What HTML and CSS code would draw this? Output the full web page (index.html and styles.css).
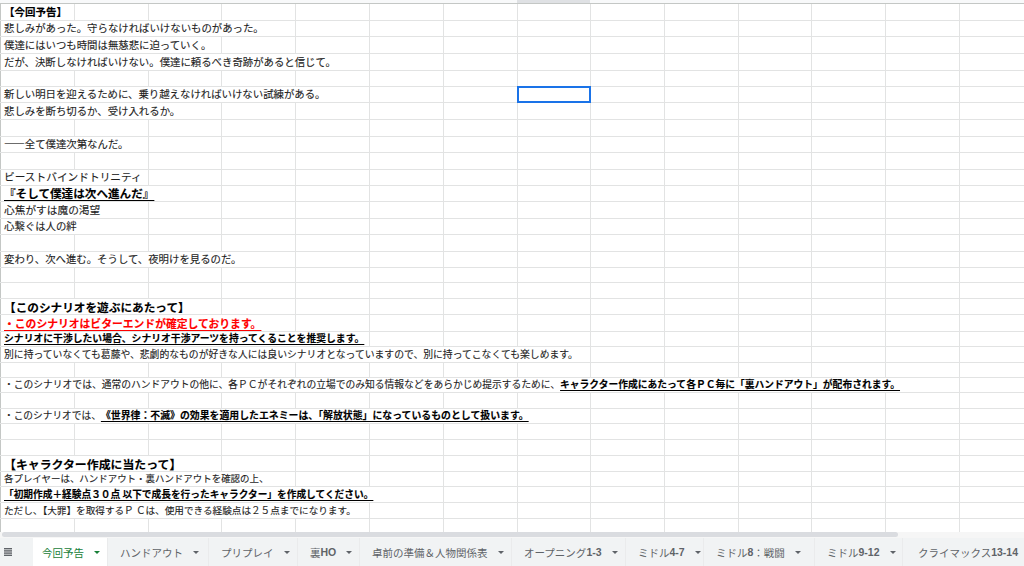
FILE: index.html
```html
<!DOCTYPE html>
<html lang="ja">
<head>
<meta charset="utf-8">
<title>今回予告</title>
<link rel="stylesheet" href="styles.css">
</head>
<body>
<div class="app">
  <div class="colhead cols"><i class="hsel"></i></div>
  <div class="grid">
    <div class="row cols h17"><div class="cell s1 t-title">【今回予告】</div></div>
    <div class="row cols h16"><div class="cell s4">悲しみがあった。守らなければいけないものがあった。</div></div>
    <div class="row cols h17"><div class="cell s3">僕達にはいつも時間は無慈悲に迫っていく。</div></div>
    <div class="row cols h17"><div class="cell s5">だが、決断しなければいけない。僕達に頼るべき奇跡があると信じて。</div></div>
    <div class="row cols h16"></div>
    <div class="row cols h16"><div class="cell s5">新しい明日を迎えるために、乗り越えなければいけない試練がある。</div><div class="sel"></div></div>
    <div class="row cols h17"><div class="cell s3">悲しみを断ち切るか、受け入れるか。</div></div>
    <div class="row cols h17"></div>
    <div class="row cols h16"><div class="cell s2">――全て僕達次第なんだ。</div></div>
    <div class="row cols h17"></div>
    <div class="row cols h16"><div class="cell s2 t-kana">ビーストバインドトリニティ</div></div>
    <div class="row cols h16"><div class="cell s3 t-em"><span class="u">『そして僕達は次へ進んだ』</span></div></div>
    <div class="row cols h17"><div class="cell s2 t-kana">心焦がすは魔の渇望</div></div>
    <div class="row cols h16"><div class="cell s2">心繋ぐは人の絆</div></div>
    <div class="row cols h17"></div>
    <div class="row cols h16"><div class="cell s4">変わり、次へ進む。そうして、夜明けを見るのだ。</div></div>
    <div class="row cols h15"></div>
    <div class="row cols h16"></div>
    <div class="row cols h16"><div class="cell s3 t-head">【このシナリオを遊ぶにあたって】</div></div>
    <div class="row cols h17"><div class="cell s4 t-red"><span class="u">・このシナリオはビターエンドが確定しております。</span></div></div>
    <div class="row cols h15"><div class="cell s5 t-s98"><span class="u">シナリオに干渉したい場合、シナリオ干渉アーツを持ってくることを推奨します。</span></div></div>
    <div class="row cols h16"><div class="cell s8 t-s98">別に持っていなくても葛藤や、悲劇的なものが好きな人には良いシナリオとなっていますので、別に持ってこなくても楽しめます。</div></div>
    <div class="row cols h15"></div>
    <div class="row cols h15"><div class="cell s13 t-s978">・このシナリオでは、通常のハンドアウトの他に、各ＰＣがそれぞれの立場でのみ知る情報などをあらかじめ提示するために、<span class="u">キャラクター作成にあたって各ＰＣ毎に「裏ハンドアウト」が配布されます。</span></div></div>
    <div class="row cols h16"></div>
    <div class="row cols h15"><div class="cell s8 t-s97">・このシナリオでは、<span class="u wide">《世界律：不滅》の効果を適用したエネミーは、「解放状態」になっているものとして扱います。</span></div></div>
    <div class="row cols h16"></div>
    <div class="row cols h16"></div>
    <div class="row cols h16"><div class="cell s3 t-head2">【キャラクター作成に当たって】</div></div>
    <div class="row cols h15"><div class="cell s4 t-s95">各プレイヤーは、ハンドアウト・裏ハンドアウトを確認の上、</div></div>
    <div class="row cols h16"><div class="cell s6 t-s97"><span class="u">「初期作成＋経験点３０点 以下で成長を行ったキャラクター」を作成してください。</span></div></div>
    <div class="row cols h16"><div class="cell s5 t-s96">ただし、【大罪】を取得するＰ Ｃは、使用できる経験点は２５点までになります。</div></div>
    <div class="row cols h13"></div>
  </div>
  <div class="hscroll"><div class="thumb"></div></div>
  <div class="tabbar">
    <div class="menu">
      <svg width="8" height="8" viewBox="0 0 8 8"><rect x="0" y="0" width="8" height="1.4" fill="#5f6368"/><rect x="0" y="2.2" width="8" height="1.4" fill="#5f6368"/><rect x="0" y="4.4" width="8" height="1.4" fill="#5f6368"/><rect x="0" y="6.6" width="8" height="1.4" fill="#5f6368"/></svg>
    </div>
    <div class="tab active tw1">今回予告<i class="caret"></i></div>
    <div class="tab tw2">ハンドアウト<i class="caret"></i></div>
    <div class="tab tw3">プリプレイ<i class="caret"></i></div>
    <div class="tab tw4">裏<span class="lat">HO</span><i class="caret"></i></div>
    <div class="tab tw5">卓前の準備＆人物関係表<i class="caret"></i></div>
    <div class="tab tw6">オープニング<span class="lat">1-3</span><i class="caret"></i></div>
    <div class="tab tw7">ミドル<span class="lat">4-7</span><i class="caret"></i></div>
    <div class="tab tw8">ミドル<span class="lat">8</span>：戦闘<i class="caret"></i></div>
    <div class="tab tw9">ミドル<span class="lat">9-12</span><i class="caret"></i></div>
    <div class="tab tw10">クライマックス<span class="lat">13-14</span></div>
  </div>
</div>
</body>
</html>
```
FILE: styles.css
```css
html, body {
  margin: 0;
  padding: 0;
}
body {
  width: 1024px;
  height: 566px;
  overflow: hidden;
  background: #fff;
  font-family: "Noto Sans CJK JP", "Liberation Sans", sans-serif;
  color: #1e1e1e;
}
.app {
  display: flex;
  flex-direction: column;
  height: 566px;
  overflow: hidden;
}
.cols {
  display: grid;
  grid-template-columns: 74px 74px 73px 74px 74px 74px 74px 73px 74px 74px 73px 74px 74px 74px;
}
.colhead {
  height: 4px;
  box-sizing: border-box;
  background: #f8f9fa;
  border-bottom: 1px solid #c4c7c5;
  flex: none;
}
.colhead .hsel {
  grid-column: 8;
  background: #dfe1e4;
}
.grid {
  flex: none;
  background-image:
    linear-gradient(#c4c7c5, #c4c7c5),
    linear-gradient(#e2e3e3, #e2e3e3), linear-gradient(#e2e3e3, #e2e3e3),
    linear-gradient(#e2e3e3, #e2e3e3), linear-gradient(#e2e3e3, #e2e3e3),
    linear-gradient(#e2e3e3, #e2e3e3), linear-gradient(#e2e3e3, #e2e3e3),
    linear-gradient(#e2e3e3, #e2e3e3), linear-gradient(#e2e3e3, #e2e3e3),
    linear-gradient(#e2e3e3, #e2e3e3), linear-gradient(#e2e3e3, #e2e3e3),
    linear-gradient(#e2e3e3, #e2e3e3), linear-gradient(#e2e3e3, #e2e3e3),
    linear-gradient(#e2e3e3, #e2e3e3);
  background-position: 0 0, 74px 0, 148px 0, 221px 0, 295px 0, 369px 0, 443px 0,
    517px 0, 590px 0, 664px 0, 738px 0, 811px 0, 885px 0, 959px 0;
  background-size: 1px 100%;
  background-repeat: no-repeat;
}
.row {
  box-sizing: border-box;
  border-bottom: 1px solid #e2e3e3;
}
.h13 { height: 13px; border-bottom: none; }
.h15 { height: 15px; }
.h16 { height: 16px; }
.h17 { height: 17px; }

.cell {
  background: #fff;
  margin-left: 1px;
  padding-left: 3px;
  display: flex;
  align-items: center;
  white-space: nowrap;
  line-height: 1;
  font-size: 10.4px;
  min-width: 0;
  -webkit-text-stroke: 0.12px currentColor;
}
.s1 { grid-column: 1 / span 1; }
.s2 { grid-column: 1 / span 2; }
.s3 { grid-column: 1 / span 3; }
.s4 { grid-column: 1 / span 4; }
.s5 { grid-column: 1 / span 5; }
.s6 { grid-column: 1 / span 6; }
.s8 { grid-column: 1 / span 8; }
.s13 { grid-column: 1 / span 13; }

.t-title { font-size: 10.5px; font-weight: 700; color: #000; }
.t-kana { font-size: 10.7px; }
.t-em { font-size: 11.6px; }
.t-head { font-size: 11.65px; font-weight: 700; color: #000; }
.t-head2 { font-size: 11.9px; font-weight: 700; color: #000; }
.t-red { font-size: 10.8px; color: #ff0000; }
.t-red .u { color: #ff0000; }
.t-s98 { font-size: 9.82px; }
.t-s978 { font-size: 9.78px; }
.t-s97 { font-size: 9.7px; }
.t-s96 { font-size: 9.62px; }
.t-s95 { font-size: 9.46px; }
.u {
  font-weight: 700;
  color: #000;
  text-decoration: underline;
  text-underline-offset: 1.5px;
}
.wide { font-size: 9.9px; }

.sel {
  grid-column: 8;
  margin: -1px -1px -1px 0;
  border: 2px solid #1a73e8;
  box-sizing: border-box;
}

.hscroll {
  flex: none;
  height: 6px;
  background: #f6f6f6;
  padding: 0 0 0 2px;
  box-sizing: border-box;
}
.thumb {
  width: 896px;
  height: 5px;
  background: #dadce0;
  border-radius: 3px;
}

.tabbar {
  flex: 1;
  display: flex;
  background: #f1f3f4;
  font-family: "Liberation Sans", "Noto Sans CJK JP", sans-serif;
  font-size: 10.5px;
  color: #5f6368;
}
.menu {
  flex: none;
  width: 33px;
  box-sizing: border-box;
  padding-left: 4px;
  display: flex;
  align-items: center;
}
.tab {
  flex: none;
  display: flex;
  align-items: center;
  box-sizing: border-box;
  border-right: 1px solid #eaebec;
  white-space: nowrap;
  padding-left: 12px;
}
.tab.active {
  background: #fff;
  color: #188038;
  padding-left: 9px;
}
.lat { font-weight: 700; }
.caret {
  width: 0;
  height: 0;
  border-left: 3px solid transparent;
  border-right: 3px solid transparent;
  border-top: 3px solid currentColor;
  margin-left: 10px;
}
.tw1 { width: 75px; }
.tw2 { width: 101px; }
.tw3 { width: 89px; }
.tw4 { width: 62px; }
.tw5 { width: 152px; }
.tw6 { width: 114px; }
.tw7 { width: 78px; }
.tw8 { width: 111px; }
.tw9 { width: 88px; }
.tw10 { width: 160px; border-right: none; padding-left: 15px; }
```
